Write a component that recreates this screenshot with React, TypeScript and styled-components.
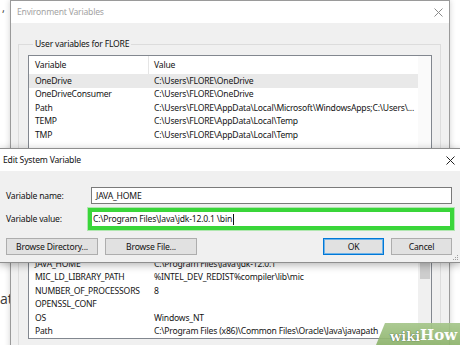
import React from 'react';
import styled, { createGlobalStyle } from 'styled-components';

const UI_FONT = `"Noto Sans", "Liberation Sans", sans-serif`;
const UI_SIZE = '8.6px';

const GlobalStyle = createGlobalStyle`
  html, body { margin: 0; padding: 0; background: #ffffff; }
  body {
    width: 460px;
    height: 345px;
    overflow: hidden;
    font-family: ${UI_FONT};
    font-size: ${UI_SIZE};
    letter-spacing: -0.2px;
  }
  * { box-sizing: border-box; }
`;

// user / system variable rows, as seen in the lists
const userVars = [
  { name: 'OneDrive', value: 'C:\\Users\\FLORE\\OneDrive', selected: true },
  { name: 'OneDriveConsumer', value: 'C:\\Users\\FLORE\\OneDrive' },
  { name: 'Path', value: 'C:\\Users\\FLORE\\AppData\\Local\\Microsoft\\WindowsApps;C:\\Users\\...' },
  { name: 'TEMP', value: 'C:\\Users\\FLORE\\AppData\\Local\\Temp' },
  { name: 'TMP', value: 'C:\\Users\\FLORE\\AppData\\Local\\Temp' },
];

// the first two rows sit behind the edit dialog, so they stay blank
const systemVars = [
  { name: '', value: '' },
  { name: '', value: '' },
  { name: 'JAVA_HOME', value: 'C:\\Program Files\\Java\\jdk-12.0.1' },
  { name: 'MIC_LD_LIBRARY_PATH', value: '%INTEL_DEV_REDIST%compiler\\lib\\mic' },
  { name: 'NUMBER_OF_PROCESSORS', value: '8' },
  { name: 'OPENSSL_CONF', value: '' },
  { name: 'OS', value: 'Windows_NT' },
  { name: 'Path', value: 'C:\\Program Files (x86)\\Common Files\\Oracle\\Java\\javapath' },
];

const Desktop = styled.div`
  position: relative;
  width: 460px;
  height: 345px;
  overflow: hidden;
  background: #ffffff;
`;

// bits of the page that lies behind both windows
const BehindText = styled.span<{ $top: number; $left: number; $size: number }>`
  position: absolute;
  left: ${p => p.$left}px;
  top: ${p => p.$top}px;
  font-family: "Open Sans", sans-serif;
  font-size: ${p => p.$size}px;
  letter-spacing: 0;
  line-height: 1;
  color: #3a3a3a;
  white-space: nowrap;
`;

const Window = styled.div`
  position: absolute;
  left: 10px;
  top: 0;
  width: 440px;
  height: 380px;
  border: 1px solid #9a9a9a;
  background: #f0f0f0;
  box-shadow: 0 0 6px rgba(0, 0, 0, 0.18);
  display: flex;
  flex-direction: column;
`;

const TitleBar = styled.div<{ $height: number }>`
  height: ${p => p.$height}px;
  flex: none;
  background: #ffffff;
  display: flex;
  align-items: center;
  justify-content: space-between;
`;

const Title = styled.span<{ $inactive?: boolean; $pad: number }>`
  padding-left: ${p => p.$pad}px;
  color: ${p => (p.$inactive ? '#a3a3a3' : '#111111')};
`;

const CloseBox = styled.span<{ $right: number; $color: string }>`
  display: flex;
  margin-right: ${p => p.$right}px;
  color: ${p => p.$color};
`;

const WindowBody = styled.div`
  padding: 15px 8px 0 7px;
  display: flex;
  flex-direction: column;
`;

const GroupBox = styled.fieldset<{ $gap?: number }>`
  margin: ${p => p.$gap ?? 0}px 0 0 0;
  padding: 0 8px 7px 9px;
  border: 1px solid #dcdcdc;
  min-width: 0;
`;

const GroupLegend = styled.legend`
  padding: 0 2px;
  margin-left: 5px;
  height: 12px;
  line-height: 12px;
  color: #111111;
`;

const ListBox = styled.div<{ $height: number; $top: number }>`
  margin-top: ${p => p.$top}px;
  height: ${p => p.$height}px;
  border: 1px solid #82878f;
  background: #ffffff;
  display: flex;
  overflow: hidden;
`;

const ListContent = styled.div`
  flex: 1;
  min-width: 0;
  overflow: hidden;
`;

const Columns = styled.div<{ $header?: boolean; $selected?: boolean }>`
  display: grid;
  grid-template-columns: 120px 1fr;
  height: ${p => (p.$header ? 18 : 13.5)}px;
  align-items: center;
  background: ${p => (p.$selected ? '#e9e9e9' : 'transparent')};
  color: #141414;
  white-space: nowrap;
`;

const Cell = styled.span<{ $header?: boolean; $first?: boolean }>`
  padding-left: ${p => (p.$first ? 6 : 5)}px;
  height: 100%;
  display: flex;
  align-items: center;
  overflow: hidden;
  border-right: ${p => (p.$header && p.$first ? '1px solid #e5e5e5' : 'none')};
`;

const ScrollTrack = styled.div<{ $tone: string }>`
  width: 13px;
  flex: none;
  background: ${p => p.$tone};
  display: flex;
  justify-content: center;
`;

const ScrollThumb = styled.div<{ $offset: number; $length: number }>`
  margin-top: ${p => p.$offset}px;
  width: 10px;
  height: ${p => p.$length}px;
  background: #cdcdcd;
`;

const ButtonRow = styled.div<{ $top: number; $align?: string }>`
  margin-top: ${p => p.$top}px;
  display: flex;
  gap: 7px;
  justify-content: ${p => p.$align ?? 'flex-start'};
`;

const Spacer = styled.div`
  flex: 1;
`;

const Button = styled.button<{ $width: number; $primary?: boolean }>`
  width: ${p => p.$width}px;
  height: 17px;
  padding: 0;
  font-family: ${UI_FONT};
  font-size: ${UI_SIZE};
  letter-spacing: inherit;
  color: #111111;
  background: #e1e1e1;
  border: 1px solid ${p => (p.$primary ? '#0078d7' : '#adadad')};
  box-shadow: ${p => (p.$primary ? 'inset 0 0 0 1px #6fb3e8' : 'none')};
`;

const Dialog = styled.div`
  position: absolute;
  left: -1px;
  top: 148px;
  width: 462px;
  height: 115px;
  border: 1px solid #8e8e8e;
  background: #f0f0f0;
  box-shadow: 0 2px 8px rgba(0, 0, 0, 0.3);
  display: flex;
  flex-direction: column;
`;

const DialogBody = styled.div`
  position: relative;
  flex: 1;
  padding: 16px 8px 0 6px;
  display: flex;
  flex-direction: column;
`;

const FieldGrid = styled.div`
  display: grid;
  grid-template-columns: 85px 1fr;
  row-gap: 4px;
  align-items: center;
`;

const FieldLabel = styled.label`
  color: #111111;
`;

const TextField = styled.div<{ $focus?: boolean }>`
  height: ${p => (p.$focus ? 16 : 17)}px;
  margin: ${p => (p.$focus ? '3px 1px 3px 0' : '0')};
  border: 1px solid ${p => (p.$focus ? '#39d639' : '#7a7a7a')};
  background: #ffffff;
  padding-left: ${p => (p.$focus ? 1 : 4)}px;
  display: flex;
  align-items: center;
  color: #111111;
  white-space: nowrap;
  box-shadow: ${p => (p.$focus ? '0 0 0 3px #3ad63a, 0 0 0 4px rgba(58, 214, 58, 0.35)' : 'none')};
`;

const Caret = styled.span`
  width: 1px;
  height: 11px;
  margin-left: 1px;
  background: #111111;
`;

// size grip in the dialog's lower right corner
const Grip = styled.svg`
  position: absolute;
  right: 1px;
  bottom: 1px;
`;

const WikiBadge = styled.div`
  position: absolute;
  right: 0;
  bottom: 0;
  width: 84px;
  height: 22px;
  background: linear-gradient(#a5c68a, #8db36b);
  opacity: 0.92;
  clip-path: polygon(9px 0, 100% 0, 100% 100%, 0 100%);
  display: flex;
  align-items: flex-end;
  padding: 0 0 2px 14px;
  font-family: "DejaVu Serif", "Liberation Serif", serif;
  font-weight: bold;
  letter-spacing: 0;
  white-space: nowrap;
`;

const WikiPart = styled.span<{ $size: number; $outline?: boolean }>`
  font-size: ${p => p.$size}px;
  line-height: 1;
  color: #ffffff;
  text-shadow: ${p => (p.$outline ? '0 0 1px #3c5a2a, 0 0 1px #3c5a2a' : 'none')};
`;

const CloseGlyph = () => (
  <svg width="9" height="9" viewBox="0 0 9 9">
    <path d="M0.5 0.5 L8.5 8.5 M8.5 0.5 L0.5 8.5" stroke="currentColor" strokeWidth="1" fill="none" />
  </svg>
);

// header labels are passed in; the system list's header is covered by the dialog
const VarList = ({ rows, height, top, thumb, headers = ['', ''] }: any) => (
  <ListBox $height={height} $top={top}>
    <ListContent>
      <Columns $header>
        <Cell $header $first>{headers[0]}</Cell>
        <Cell $header>{headers[1]}</Cell>
      </Columns>
      {rows.map((r: any, i: number) => (
        <Columns key={i} $selected={r.selected}>
          <Cell $first>{r.name}</Cell>
          <Cell>{r.value}</Cell>
        </Columns>
      ))}
    </ListContent>
    <ScrollTrack $tone={thumb ? '#f0f0f0' : '#fafafa'}>
      {thumb && <ScrollThumb $offset={thumb.offset} $length={thumb.length} />}
    </ScrollTrack>
  </ListBox>
);

export default function App() {
  return (
    <Desktop>
      <GlobalStyle />
      <BehindText $left={2} $top={2} $size={11}>,</BehindText>
      <BehindText $left={0} $top={292} $size={14}>ati</BehindText>

      <Window>
        <TitleBar $height={22}>
          <Title $inactive $pad={6}>Environment Variables</Title>
          <CloseBox $right={6} $color="#8a8a8a"><CloseGlyph /></CloseBox>
        </TitleBar>
        <WindowBody>
          <GroupBox>
            <GroupLegend>User variables for FLORE</GroupLegend>
            <VarList rows={userVars} height={104} top={5} headers={['Variable', 'Value']} />
            {/* New / Edit / Delete buttons, covered by the edit dialog */}
            <ButtonRow $top={6} $align="flex-end">
              <Button $width={61} />
              <Button $width={61} />
              <Button $width={61} />
            </ButtonRow>
          </GroupBox>
          <GroupBox $gap={7}>
            <GroupLegend />
            <VarList rows={systemVars} height={128} top={2} thumb={{ offset: 32, length: 35 }} />
          </GroupBox>
        </WindowBody>
      </Window>

      <Dialog>
        <TitleBar $height={22}>
          <Title $pad={3}>Edit System Variable</Title>
          <CloseBox $right={5} $color="#222222"><CloseGlyph /></CloseBox>
        </TitleBar>
        <DialogBody>
          <FieldGrid>
            <FieldLabel>Variable name:</FieldLabel>
            <TextField>JAVA_HOME</TextField>
            <FieldLabel>Variable value:</FieldLabel>
            <TextField $focus>C:\Program Files\Java\jdk-12.0.1 \bin<Caret /></TextField>
          </FieldGrid>
          <ButtonRow $top={8}>
            <Button $width={92}>Browse Directory...</Button>
            <Button $width={92}>Browse File...</Button>
            <Spacer />
            <Button $width={61} $primary>OK</Button>
            <Button $width={61}>Cancel</Button>
          </ButtonRow>
          <Grip width="7" height="7" viewBox="0 0 7 7">
            <rect x="5" y="1" width="1" height="1" fill="#a0a0a0" />
            <rect x="3" y="3" width="1" height="1" fill="#a0a0a0" />
            <rect x="5" y="3" width="1" height="1" fill="#a0a0a0" />
            <rect x="1" y="5" width="1" height="1" fill="#a0a0a0" />
            <rect x="3" y="5" width="1" height="1" fill="#a0a0a0" />
            <rect x="5" y="5" width="1" height="1" fill="#a0a0a0" />
          </Grip>
        </DialogBody>
      </Dialog>

      <WikiBadge>
        <WikiPart $size={13} $outline>wiki</WikiPart>
        <WikiPart $size={15}>How</WikiPart>
      </WikiBadge>
    </Desktop>
  );
}
